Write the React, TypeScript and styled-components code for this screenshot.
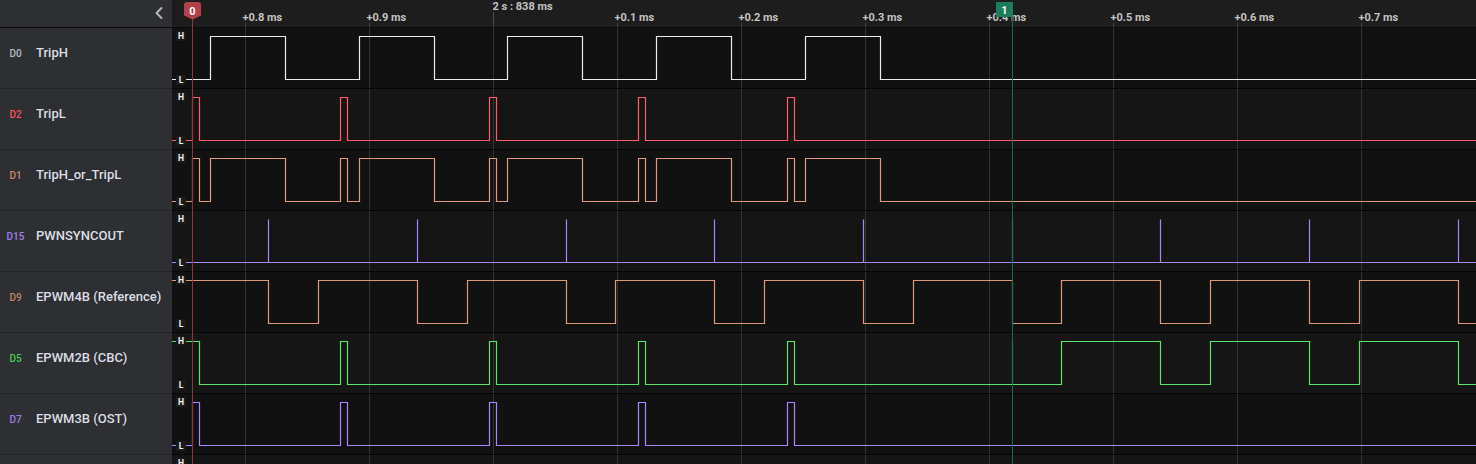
import React from "react";
import styled, { createGlobalStyle } from "styled-components";
import { ChevronLeft } from "lucide-react";

const GlobalStyle = createGlobalStyle`
  html, body {
    margin: 0;
    padding: 0;
    background: #111111;
    overflow: hidden;
  }
  body {
    font-family: Roboto, "Noto Sans", sans-serif;
  }
`;

// px offset of the trace area and the pwm period in screen px
const LEFT = 172;
const P = 148.7;
const HI = 8.5;
const LO = 51.5;

const snap = (abs: number) => Math.round(abs) - LEFT + 0.5;
const ks = (from: number, to: number) =>
  Array.from({ length: to - from + 1 }, (_, i) => from + i);

type Signal = {
  id: string;
  tag: string;
  tagColor: string;
  name: string;
  color: string;
  start: 0 | 1;
  edges: number[];
  spikes?: number[];
};

const pulses = (list: number[]) =>
  list.flatMap(k => [191.7 + k * P, 198.7 + k * P]);

const signals: Signal[] = [
  {
    id: "d0",
    tag: "D0",
    tagColor: "#b7bcc6",
    name: "TripH",
    color: "#ececec",
    start: 0,
    edges: ks(0, 4).flatMap(k => [210 + k * P, 285 + k * P]),
  },
  {
    id: "d2",
    tag: "D2",
    tagColor: "#f2525f",
    name: "TripL",
    color: "#ff5c6c",
    start: 0,
    edges: pulses(ks(0, 4)),
  },
  {
    id: "d1",
    tag: "D1",
    tagColor: "#c8876a",
    name: "TripH_or_TripL",
    color: "#dd9c7f",
    start: 0,
    edges: ks(0, 4).flatMap(k => [
      191.7 + k * P,
      198.7 + k * P,
      210 + k * P,
      285 + k * P,
    ]),
  },
  {
    id: "d15",
    tag: "D15",
    tagColor: "#9b7fea",
    name: "PWNSYNCOUT",
    color: "#a886ff",
    start: 0,
    edges: [],
    spikes: ks(0, 8).map(k => 268.1 + k * P),
  },
  {
    id: "d9",
    tag: "D9",
    tagColor: "#bf8468",
    name: "EPWM4B (Reference)",
    color: "#dc9a7c",
    start: 1,
    edges: [
      ...ks(0, 7).flatMap(k => [268.1 + k * P, 317.9 + k * P]),
      268.1 + 8 * P,
    ],
  },
  {
    id: "d5",
    tag: "D5",
    tagColor: "#46cb51",
    name: "EPWM2B (CBC)",
    color: "#5fe26b",
    start: 1,
    edges: [
      198.7,
      ...pulses(ks(1, 4)),
      ...ks(5, 7).flatMap(k => [317.9 + k * P, 268.1 + (k + 1) * P]),
    ],
    spikes: [268.1 + 5 * P],
  },
  {
    id: "d7",
    tag: "D7",
    tagColor: "#9b7ae2",
    name: "EPWM3B (OST)",
    color: "#a886ff",
    start: 0,
    edges: pulses(ks(0, 4)),
  },
];

const ticks = [
  { x: 245, label: "+0.8 ms" },
  { x: 369, label: "+0.9 ms" },
  { x: 493, label: "2 s : 838 ms", major: true },
  { x: 617, label: "+0.1 ms" },
  { x: 741, label: "+0.2 ms" },
  { x: 865, label: "+0.3 ms" },
  { x: 989, label: "+0.4 ms" },
  { x: 1113, label: "+0.5 ms" },
  { x: 1237, label: "+0.6 ms" },
  { x: 1361, label: "+0.7 ms" },
];

function wavePath(s: Signal, width: number) {
  let level = s.start;
  let d = `M0 ${level ? HI : LO}`;
  for (const e of s.edges) {
    level = level ? 0 : 1;
    d += ` H${snap(e)} V${level ? HI : LO}`;
  }
  d += ` H${width}`;
  for (const sp of s.spikes || []) {
    d += ` M${snap(sp)} ${HI} V${LO}`;
  }
  return d;
}

const Page = styled.div`
  display: flex;
  width: 1476px;
  height: 464px;
  overflow: hidden;
`;

const Sidebar = styled.div`
  width: ${LEFT}px;
  flex: none;
  background: #2e2f33;
`;

const SideHeader = styled.div`
  height: 28px;
  box-sizing: border-box;
  border-bottom: 1px solid #0b0b0b;
  display: flex;
  align-items: center;
  justify-content: flex-end;
  padding: 0 3px 1px 0;
  color: #b3b4b8;
`;

const ChannelRow = styled.div`
  height: 61px;
  box-sizing: border-box;
  border-bottom: 1px solid #232428;
  display: flex;
  align-items: center;
  padding-bottom: 12px;
`;

const ChannelTag = styled.span<{ $color: string }>`
  width: 31px;
  margin-top: 3px;
  text-align: center;
  font-size: 10px;
  font-weight: 500;
  color: ${p => p.$color};
`;

const ChannelName = styled.span`
  margin-left: 5px;
  font-size: 13px;
  font-weight: 500;
  color: #dadde3;
  white-space: nowrap;
`;

const Timeline = styled.div`
  flex: 1;
  position: relative;
  background: #111111;
`;

const Ruler = styled.svg`
  display: block;
  height: 28px;
  width: 100%;
  background: #1d1d1d;
  border-bottom: 1px solid #0b0b0b;
  box-sizing: border-box;
`;

const RulerText = styled.text`
  font-family: Roboto, "Noto Sans", sans-serif;
  font-size: 11px;
  font-weight: 700;
  fill: #c3c3c3;
`;

const TraceRow = styled.div<{ $alt: boolean }>`
  position: relative;
  height: 61px;
  box-sizing: border-box;
  border-bottom: 1px solid #060606;
  background: ${p => (p.$alt ? "#151515" : "#111111")};
`;

const TraceSvg = styled.svg`
  display: block;
  width: 100%;
  height: 60px;
`;

const LevelTag = styled.span<{ $top: number }>`
  position: absolute;
  left: 4px;
  top: ${p => p.$top}px;
  width: 10px;
  height: 10px;
  display: flex;
  align-items: center;
  justify-content: center;
  background: #1a1a1a;
  color: #f0f0f0;
  font-size: 8.5px;
  font-weight: 700;
  line-height: 1;
`;

const MarkerLayer = styled.svg`
  position: absolute;
  left: 0;
  top: 0;
  width: 100%;
  height: 100%;
  pointer-events: none;
`;

const FlagText = styled.text`
  font-family: Roboto, "Noto Sans", sans-serif;
  font-size: 11px;
  font-weight: 700;
  fill: #ffffff;
`;

const TRACE_W = 1476 - LEFT;

function GridLines() {
  return (
    <>
      {ticks.map(t => (
        <line
          key={t.x}
          x1={t.x - LEFT + 0.5}
          x2={t.x - LEFT + 0.5}
          y1={0}
          y2={60}
          stroke="#343434"
          strokeWidth={1}
        />
      ))}
    </>
  );
}

function Trace({ signal, alt }: { signal?: Signal; alt: boolean }) {
  return (
    <TraceRow $alt={alt}>
      <TraceSvg>
        <GridLines />
        {signal && (
          <path
            d={wavePath(signal, TRACE_W)}
            fill="none"
            stroke={signal.color}
            strokeWidth={1.2}
          />
        )}
      </TraceSvg>
      <LevelTag $top={3}>H</LevelTag>
      <LevelTag $top={47}>L</LevelTag>
    </TraceRow>
  );
}

export default function App() {
  return (
    <>
      <GlobalStyle />
      <Page>
        <Sidebar>
          <SideHeader>
            <ChevronLeft size={20} strokeWidth={2.4} />
          </SideHeader>
          {signals.map(s => (
            <ChannelRow key={s.id}>
              <ChannelTag $color={s.tagColor}>{s.tag}</ChannelTag>
              <ChannelName>{s.name}</ChannelName>
            </ChannelRow>
          ))}
          <ChannelRow />
        </Sidebar>

        <Timeline>
          <Ruler>
            {ticks.map(t => (
              <g key={t.x}>
                <line
                  x1={t.x - LEFT + 0.5}
                  x2={t.x - LEFT + 0.5}
                  y1={t.major ? 12 : 23}
                  y2={27}
                  stroke="#4a4a4a"
                />
                <RulerText
                  x={t.major ? t.x - LEFT - 0.5 : t.x - LEFT - 2.5}
                  y={t.major ? 10 : 21}
                >
                  {t.label}
                </RulerText>
              </g>
            ))}
          </Ruler>

          {signals.map((s, i) => (
            <Trace key={s.id} signal={s} alt={i % 2 === 1} />
          ))}
          <Trace alt={signals.length % 2 === 1} />

          <MarkerLayer>
            <line x1={20.5} x2={20.5} y1={19} y2={464} stroke="#8b373d" />
            <path
              d="M12 5 Q12 2 15 2 H26 Q29 2 29 5 V15.5 L20.5 19.5 L12 15.5 Z"
              fill="#b3414a"
            />
            <FlagText x={20.5} y={14.5} textAnchor="middle">
              0
            </FlagText>

            <line x1={840.5} x2={840.5} y1={16} y2={464} stroke="#1c6a4e" />
            <rect x={824} y={2} width={17} height={15} fill="#1b7d5c" />
            <FlagText x={832.5} y={13.5} textAnchor="middle">
              1
            </FlagText>
          </MarkerLayer>
        </Timeline>
      </Page>
    </>
  );
}
